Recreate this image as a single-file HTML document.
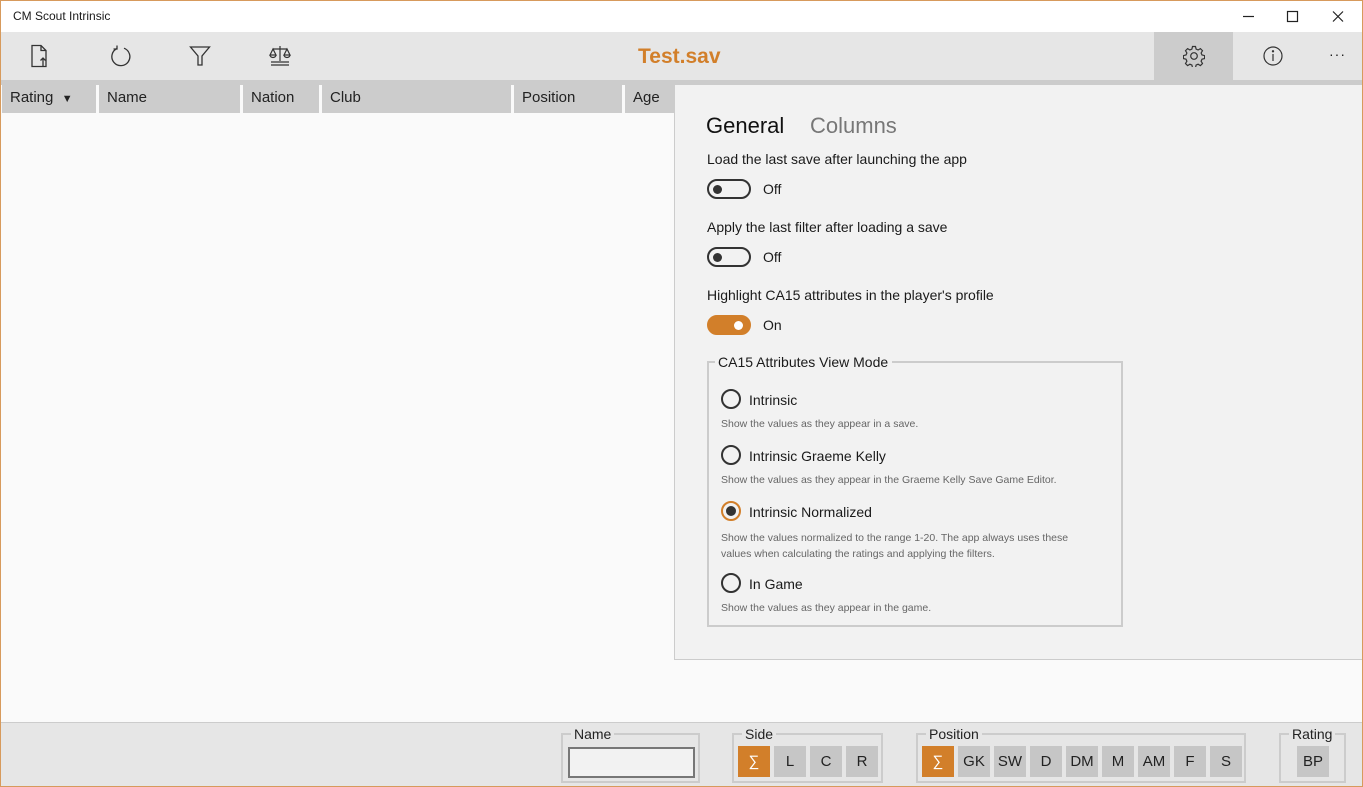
<!DOCTYPE html>
<html><head><meta charset="utf-8"><style>
*{box-sizing:border-box;margin:0;padding:0}
body{width:1363px;height:787px;overflow:hidden;font-family:"Liberation Sans",sans-serif;background:#fafafa;position:relative;color:#1a1a1a}
.frame{position:absolute;inset:0;border:1px solid #d79a5c;pointer-events:none;z-index:20}
.abs{position:absolute}
.title{left:0;top:0;width:1363px;height:32px;background:#fff}
.title span{position:absolute;left:13px;top:9px;font-size:12px}
.tb{left:0;top:32px;width:1363px;height:48px;background:#e6e6e6}
.hdr{top:80px;height:33px;background:#cccccc;font-size:15px;color:#222;padding:9px 0 0 8px}
.panel{left:674px;top:85px;width:688px;height:575px;background:#f2f2f2;border-left:1px solid #ccc;border-bottom:1px solid #ccc}
.t15{font-size:14px}
.tog{width:44px;height:20px;border:2px solid #333;border-radius:10px;position:absolute}
.tog i{position:absolute;left:4px;top:4px;width:9px;height:9px;border-radius:50%;background:#333}
.radio{width:20px;height:20px;border:2px solid #333;border-radius:50%;position:absolute}
.desc{font-size:10.5px;color:#666;position:absolute}
.bottom{left:0;top:722px;width:1363px;height:65px;background:#e6e6e6;border-top:1px solid #ccc}
.grp{position:absolute;top:733px;height:50px;border:2px solid #ccc}
.grp b{position:absolute;top:-9px;left:8px;background:#e6e6e6;padding:0 3px;font-weight:normal;font-size:14px;color:#222}
.btn{position:absolute;top:11px;width:32px;height:31px;background:#c6c6c6;font-size:15px;text-align:center;line-height:31px;color:#222}
.btn.o{background:#d27f2a;color:#fff}
</style></head><body>
<div class="frame"></div>
<div class="abs title"><span>CM Scout Intrinsic</span>
<svg class="abs" style="left:1240px;top:10px" width="110" height="14" stroke="#222" fill="none" stroke-width="1.2"><path d="M3 6.5h11"/><rect x="47.5" y="1.5" width="10" height="10"/><path d="M93 1.5l10 10M103 1.5l-10 10"/></svg></div>
<div class="abs tb">
<svg class="abs" style="left:30px;top:12px" width="24" height="24" fill="none" stroke="#333" stroke-width="1.3"><path d="M2 1.5h9l5 5v16H2z M11 1.5v5h5"/><path d="M13 22V14M10.5 16.5l2.5-2.5 2.5 2.5"/></svg>
<svg class="abs" style="left:109px;top:12px" width="24" height="24" fill="none" stroke="#333" stroke-width="1.3"><path d="M8 4.5A9 9 0 1 0 15 4.2"/><path d="M8 1.5v3.5h-3.5"/></svg>
<svg class="abs" style="left:189px;top:13px" width="24" height="22" fill="none" stroke="#333" stroke-width="1.3"><path d="M1.5 2h19l-7.5 9v9h-4v-9z"/></svg>
<svg class="abs" style="left:269px;top:13px" width="24" height="22" fill="none" stroke="#333" stroke-width="1.2"><path d="M11 1v15M4 4h14M4 4l-3 6h6zM18 4l-3 6h6zM1 10a3 2.5 0 0 0 6 0M15 10a3 2.5 0 0 0 6 0M2 17h18M2 20h18"/></svg>
<div class="abs" style="left:638px;top:13px;font-size:21px;font-weight:bold;color:#d27f2a">Test.sav</div>
<div class="abs" style="left:1154px;top:0;width:79px;height:48px;background:#cccccc"></div>
<svg class="abs" style="left:1183px;top:13px" width="22" height="22" fill="none" stroke="#333" stroke-width="1.2"><circle cx="11" cy="11" r="3.3"/><path d="M9.5 1.5h3l.6 2.6 2 .9 2.3-1.4 2.1 2.1-1.4 2.3.9 2 2.6.6v3l-2.6.6-.9 2 1.4 2.3-2.1 2.1-2.3-1.4-2 .9-.6 2.6h-3l-.6-2.6-2-.9-2.3 1.4-2.1-2.1 1.4-2.3-.9-2-2.6-.6v-3l2.6-.6.9-2-1.4-2.3 2.1-2.1 2.3 1.4 2-.9z"/></svg>
<svg class="abs" style="left:1262px;top:13px" width="22" height="22" fill="none" stroke="#333" stroke-width="1.2"><circle cx="11" cy="11" r="9"/><path d="M11 9v7"/><circle cx="11" cy="6.3" r=".6" fill="#333"/></svg>
<div class="abs" style="left:1329px;top:14px;font-size:14px;letter-spacing:1px">···</div>
</div>
<div class="abs" style="left:0;top:80px;width:1363px;height:5px;background:#cccccc"></div>
<div class="abs hdr" style="left:2px;width:94px">Rating&nbsp;&nbsp;<span style="font-size:11px">▼</span></div>
<div class="abs hdr" style="left:99px;width:141px">Name</div>
<div class="abs hdr" style="left:243px;width:76px">Nation</div>
<div class="abs hdr" style="left:322px;width:189px">Club</div>
<div class="abs hdr" style="left:514px;width:108px">Position</div>
<div class="abs hdr" style="left:625px;width:60px">Age</div>
<div class="abs panel">
<div class="abs" style="left:31px;top:28px;font-size:22px;color:#111">General</div>
<div class="abs" style="left:135px;top:28px;font-size:22px;color:#777">Columns</div>
<div class="abs t15" style="left:32px;top:66px">Load the last save after launching the app</div>
<div class="tog" style="left:32px;top:94px"><i></i></div><div class="abs t15" style="left:88px;top:96px">Off</div>
<div class="abs t15" style="left:32px;top:134px">Apply the last filter after loading a save</div>
<div class="tog" style="left:32px;top:162px"><i></i></div><div class="abs t15" style="left:88px;top:164px">Off</div>
<div class="abs t15" style="left:32px;top:202px">Highlight CA15 attributes in the player's profile</div>
<div class="tog" style="left:32px;top:230px;background:#d27f2a;border-color:#d27f2a"><i style="background:#fff;left:25px"></i></div><div class="abs t15" style="left:88px;top:232px">On</div>
<div class="abs" style="left:32px;top:276px;width:416px;height:266px;border:2px solid #ccc">
<div class="abs t15" style="left:6px;top:-9px;background:#f2f2f2;padding:0 4px 0 3px">CA15 Attributes View Mode</div>
<div class="radio" style="left:12px;top:26px"></div><div class="abs t15" style="left:40px;top:29px">Intrinsic</div>
<div class="desc" style="left:12px;top:55px">Show the values as they appear in a save.</div>
<div class="radio" style="left:12px;top:82px"></div><div class="abs t15" style="left:40px;top:85px">Intrinsic Graeme Kelly</div>
<div class="desc" style="left:12px;top:111px">Show the values as they appear in the Graeme Kelly Save Game Editor.</div>
<div class="radio" style="left:12px;top:138px;border-color:#d27f2a"><i style="position:absolute;left:3px;top:3px;width:10px;height:10px;border-radius:50%;background:#333"></i></div><div class="abs t15" style="left:40px;top:141px">Intrinsic Normalized</div>
<div class="desc" style="left:12px;top:167px;width:400px;line-height:16px">Show the values normalized to the range 1-20. The app always uses these<br>values when calculating the ratings and applying the filters.</div>
<div class="radio" style="left:12px;top:210px"></div><div class="abs t15" style="left:40px;top:213px">In Game</div>
<div class="desc" style="left:12px;top:239px">Show the values as they appear in the game.</div>
</div>
</div>
<div class="abs bottom"></div>
<div class="grp" style="left:561px;width:139px"><b>Name</b><div class="abs" style="left:5px;top:12px;width:127px;height:31px;border:2px solid #777;background:#f2f2f2"></div></div>
<div class="grp" style="left:732px;width:151px"><b>Side</b><div class="btn o" style="left:4px">∑</div><div class="btn" style="left:40px">L</div><div class="btn" style="left:76px">C</div><div class="btn" style="left:112px">R</div></div>
<div class="grp" style="left:916px;width:330px"><b>Position</b><div class="btn o" style="left:4px">∑</div><div class="btn" style="left:40px">GK</div><div class="btn" style="left:76px">SW</div><div class="btn" style="left:112px">D</div><div class="btn" style="left:148px">DM</div><div class="btn" style="left:184px">M</div><div class="btn" style="left:220px">AM</div><div class="btn" style="left:256px">F</div><div class="btn" style="left:292px">S</div></div>
<div class="grp" style="left:1279px;width:67px"><b>Rating</b><div class="btn" style="left:16px">BP</div></div>
</body></html>
